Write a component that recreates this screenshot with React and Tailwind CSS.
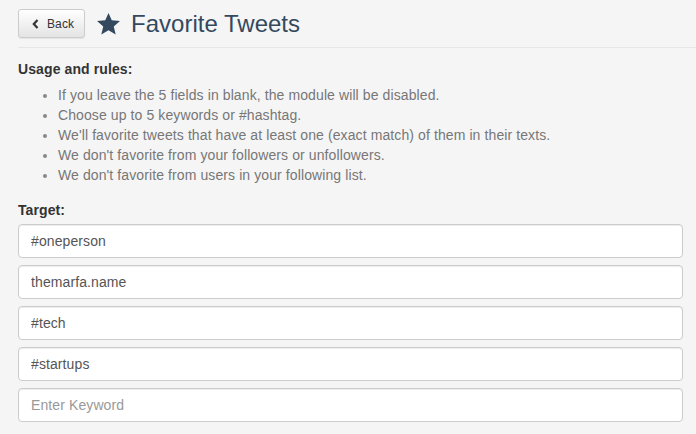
import { useState } from "react";

const rules = [
  "If you leave the 5 fields in blank, the module will be disabled.",
  "Choose up to 5 keywords or #hashtag.",
  "We'll favorite tweets that have at least one (exact match) of them in their texts.",
  "We don't favorite from your followers or unfollowers.",
  "We don't favorite from users in your following list.",
];

function StarIcon() {
  return (
    <svg width="23" height="22" viewBox="0 0 24 23" className="shrink-0">
      <path
        d="M12 0l3.4 7.6 8.6 0.8-6.5 5.7 2 8.4L12 18l-7.5 4.5 2-8.4L0 8.4l8.6-0.8z"
        fill="#34495e"
      />
    </svg>
  );
}

export default function App() {
  const [keywords, setKeywords] = useState(["#oneperson", "themarfa.name", "#tech", "#startups", ""]);

  return (
    <div
      className="min-h-screen bg-[#f5f5f5] pl-[18px] text-[14px] leading-[20px] text-[#333] tracking-[0.1px]"
      style={{ fontFamily: '"Liberation Sans", Arial, sans-serif' }}
    >
      {/* Header */}
      <div className="flex items-center pt-[9px] pb-[9px] border-b border-[#e6e6e6]">
        <button className="flex items-center h-[29px] pl-[13px] pr-[10px] gap-[8px] text-[12px] text-[#333] border border-[#ccc] rounded-[3px] bg-gradient-to-b from-white to-[#e4e4e4] shadow-[0_1px_1px_rgba(0,0,0,0.075)]">
          <svg width="7" height="10" viewBox="0 0 7 10">
            <path d="M5.5 1L1.8 5l3.7 4" stroke="#333" strokeWidth="2.2" fill="none" />
          </svg>
          Back
        </button>
        <div className="flex items-center ml-[12px] gap-[11px]">
          <StarIcon />
          <h1 className="text-[24px] leading-[28px] text-[#34495e] font-normal tracking-normal">Favorite Tweets</h1>
        </div>
      </div>

      {/* Content */}
      <div className="pr-[13px] pt-[11px]">
        <p className="font-bold">Usage and rules:</p>
        <ul className="list-disc pl-[40px] mt-[6px] text-[#777] marker:text-[#888]">
          {rules.map((r) => (
            <li key={r}>{r}</li>
          ))}
        </ul>

        <p className="font-bold mt-[15px]">Target:</p>
        <div className="flex flex-col gap-[7px] mt-[4px]">
          {keywords.map((k, i) => (
            <input
              key={i}
              value={k}
              onChange={(e) => {
                const next = [...keywords];
                next[i] = e.target.value;
                setKeywords(next);
              }}
              placeholder="Enter Keyword"
              className="h-[34px] w-full px-[12px] bg-white border border-[#ccc] rounded-[4px] text-[14px] text-[#555] placeholder:text-[#999] shadow-[inset_0_1px_1px_rgba(0,0,0,0.075)] outline-none"
            />
          ))}
        </div>
      </div>
    </div>
  );
}
